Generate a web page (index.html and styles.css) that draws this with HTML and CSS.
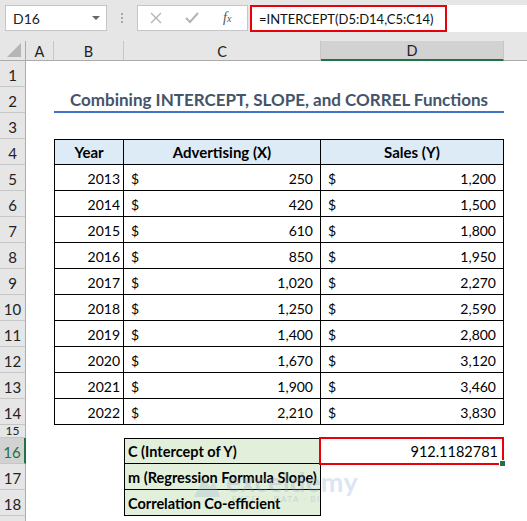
FILE: index.html
```html
<!DOCTYPE html>
<html>
<head>
<meta charset="utf-8">
<link rel="stylesheet" href="styles.css">
</head>
<body>
<div class="topbar">
  <div class="namebox"><span>D16</span><span class="caret"></span></div>
  <div class="dots"><i></i><i></i><i></i></div>
  <div class="btns">
    <svg class="ic" width="14" height="14" viewBox="0 0 14 14"><path d="M2 2L12 12M12 2L2 12" stroke="#b4b4b4" stroke-width="1.4" fill="none"/></svg>
    <svg class="ic" width="16" height="14" viewBox="0 0 16 14"><path d="M2 7L6 11L14 2" stroke="#b4b4b4" stroke-width="2" fill="none"/></svg>
    <span class="fx">f<sub>x</sub></span>
  </div>
  <div class="formula"><span class="ftext">=INTERCEPT(D5:D14,C5:C14)</span></div>
</div>
<div class="sheet">
  <div class="corner"><span class="tri"></span></div>
  <div class="ch">A</div><div class="ch">B</div><div class="ch">C</div><div class="ch sel">D</div><div class="ch last"></div>

  <div class="rh">1</div><div class="c"></div><div class="c"></div><div class="c"></div><div class="c"></div><div class="c"></div>
  <div class="rh">2</div><div class="c"></div><div class="title">Combining INTERCEPT, SLOPE, and CORREL Functions</div><div class="c"></div>
  <div class="rh">3</div><div class="c"></div><div class="c"></div><div class="c"></div><div class="c"></div><div class="c"></div>
  <div class="rh">4</div><div class="c"></div><div class="t hd first">Year</div><div class="t hd">Advertising (X)</div><div class="t hd">Sales (Y)</div><div class="c"></div>

  <div class="rh">5</div><div class="c"></div><div class="t yr first">2013</div><div class="t cur"><span>$</span><span>250</span></div><div class="t cur"><span>$</span><span>1,200</span></div><div class="c"></div>
  <div class="rh">6</div><div class="c"></div><div class="t yr first">2014</div><div class="t cur"><span>$</span><span>420</span></div><div class="t cur"><span>$</span><span>1,500</span></div><div class="c"></div>
  <div class="rh">7</div><div class="c"></div><div class="t yr first">2015</div><div class="t cur"><span>$</span><span>610</span></div><div class="t cur"><span>$</span><span>1,800</span></div><div class="c"></div>
  <div class="rh">8</div><div class="c"></div><div class="t yr first">2016</div><div class="t cur"><span>$</span><span>850</span></div><div class="t cur"><span>$</span><span>1,950</span></div><div class="c"></div>
  <div class="rh">9</div><div class="c"></div><div class="t yr first">2017</div><div class="t cur"><span>$</span><span>1,020</span></div><div class="t cur"><span>$</span><span>2,270</span></div><div class="c"></div>
  <div class="rh">10</div><div class="c"></div><div class="t yr first">2018</div><div class="t cur"><span>$</span><span>1,250</span></div><div class="t cur"><span>$</span><span>2,590</span></div><div class="c"></div>
  <div class="rh">11</div><div class="c"></div><div class="t yr first">2019</div><div class="t cur"><span>$</span><span>1,400</span></div><div class="t cur"><span>$</span><span>2,800</span></div><div class="c"></div>
  <div class="rh">12</div><div class="c"></div><div class="t yr first">2020</div><div class="t cur"><span>$</span><span>1,670</span></div><div class="t cur"><span>$</span><span>3,120</span></div><div class="c"></div>
  <div class="rh">13</div><div class="c"></div><div class="t yr first">2021</div><div class="t cur"><span>$</span><span>1,900</span></div><div class="t cur"><span>$</span><span>3,460</span></div><div class="c"></div>
  <div class="rh">14</div><div class="c"></div><div class="t yr first">2022</div><div class="t cur"><span>$</span><span>2,210</span></div><div class="t cur"><span>$</span><span>3,830</span></div><div class="c"></div>

  <div class="rh short">15</div><div class="c"></div><div class="c"></div><div class="c"></div><div class="c"></div><div class="c"></div>
  <div class="rh active">16</div><div class="c"></div><div class="c"></div><div class="g top">C (Intercept of Y)</div><div class="c res">912.1182781<span class="handle"></span></div><div class="c"></div>
  <div class="rh">17</div><div class="c"></div><div class="c"></div><div class="g">m (Regression Formula Slope)</div><div class="c"></div><div class="c"></div>
  <div class="rh">18</div><div class="c"></div><div class="c"></div><div class="g">Correlation Co-efficient</div><div class="c"></div><div class="c"></div>
  <div class="rh"></div><div class="c"></div><div class="c"></div><div class="c"></div><div class="c"></div><div class="c"></div>

  <div class="wm">
    <svg width="30" height="26" viewBox="0 0 30 26"><path d="M2 24L12 4L18 14L22 8L28 24Z" fill="#9fb8d8"/></svg>
    <div class="wmtext"><span class="wmbig">exceldemy</span><span class="wmsmall">EXCEL · DATA · BI</span></div>
  </div>
</div>
</body>
</html>
```
FILE: styles.css
```css
html, body {
  margin: 0;
  padding: 0;
}
body {
  width: 527px;
  height: 521px;
  overflow: hidden;
  background: #ffffff;
  font-family: Lato, "Noto Sans", sans-serif;
  color: #000;
}
.topbar {
  height: 41px;
  background: #e6e6e6;
  display: flex;
  align-items: flex-start;
  padding-top: 5px;
  box-sizing: border-box;
}
.namebox {
  margin-left: 5px;
  width: 102px;
  height: 26px;
  box-sizing: border-box;
  background: #fff;
  border: 1px solid #c6c6c6;
  display: flex;
  align-items: center;
  justify-content: space-between;
  padding: 0 6px 0 7px;
  font-size: 14px;
  color: #222;
}
.caret {
  width: 0;
  height: 0;
  border-left: 4px solid transparent;
  border-right: 4px solid transparent;
  border-top: 4px solid #666;
}
.dots {
  width: 30px;
  height: 26px;
  display: flex;
  flex-direction: column;
  align-items: center;
  justify-content: center;
  gap: 2px;
}
.dots i {
  width: 2px;
  height: 2px;
  background: #a8a8a8;
}
.btns {
  width: 111px;
  height: 26px;
  box-sizing: border-box;
  background: #fff;
  border: 1px solid #c6c6c6;
  display: flex;
  align-items: center;
  padding-left: 11px;
  gap: 21px;
}
.fx {
  font-family: "Liberation Serif", serif;
  font-style: italic;
  font-size: 14px;
  color: #555;
  margin-left: 2px;
}
.fx sub {
  font-size: 10px;
  vertical-align: 0;
}
.formula {
  flex: 1;
  height: 27px;
  margin-left: 2px;
  background: #fff;
}
.ftext {
  display: inline-block;
  height: 27px;
  box-sizing: border-box;
  border: 2px solid #e8000b;
  padding: 1px 12px 0 7px;
  font-size: 13px;
  line-height: 22px;
  color: #111;
}
.sheet {
  position: relative;
  display: grid;
  grid-template-columns: 26px 28px 70px 197px 183px 23px;
  grid-template-rows: 20px repeat(14, 26px) 13px repeat(3, 26px) 10px;
}
.corner {
  background: #e6e6e6;
  border-right: 1px solid #ababab;
  border-bottom: 1px solid #ababab;
  position: relative;
}
.tri {
  position: absolute;
  right: 4px;
  bottom: 3px;
  width: 0;
  height: 0;
  border-left: 14px solid transparent;
  border-bottom: 14px solid #b5b5b5;
}
.ch {
  background: #e6e6e6;
  border-right: 1px solid #c6c6c6;
  border-bottom: 1px solid #ababab;
  font-size: 14.5px;
  color: #222;
  display: flex;
  align-items: center;
  justify-content: center;
  padding-top: 1px;
}
.ch.sel {
  background: #d2d2d2;
  border-bottom: 2px solid #217346;
  color: #1f1f1f;
}
.ch.last {
  border-right: none;
}
.rh {
  background: #e6e6e6;
  border-right: 1px solid #ababab;
  border-bottom: 1px solid #c6c6c6;
  font-size: 15px;
  color: #222;
  display: flex;
  align-items: flex-end;
  justify-content: center;
  padding-bottom: 2px;
  box-sizing: border-box;
}
.rh.short {
  font-size: 12px;
  line-height: 12px;
  padding-bottom: 0;
  overflow: hidden;
}
.rh.active {
  background: #d2d2d2;
  border-right: 2px solid #217346;
  color: #217346;
}
.c {
  background: #fff;
}
.title {
  grid-column: 3 / 6;
  border-bottom: 3px solid #4472c4;
  color: #44546a;
  font-weight: 700;
  font-size: 17px;
  display: flex;
  align-items: flex-end;
  justify-content: center;
  padding-bottom: 1px;
  margin-bottom: -1px;
}
.t {
  border-right: 1px solid #000;
  border-bottom: 1px solid #000;
  font-size: 14px;
  display: flex;
  align-items: flex-end;
  padding: 0 4px 3px 4px;
  box-sizing: border-box;
}
.t.first {
  border-left: 1px solid #000;
}
.t.hd {
  border-top: 1px solid #000;
  background: #ddebf7;
  font-weight: 700;
  font-size: 15px;
  justify-content: center;
}
.t.yr {
  justify-content: flex-end;
  padding-right: 3px;
}
.t.cur {
  justify-content: space-between;
  padding-left: 7px;
  padding-right: 7px;
}
.g {
  background: #e2efda;
  border: 1px solid #000;
  border-top: none;
  font-weight: 700;
  font-size: 14.5px;
  display: flex;
  align-items: flex-end;
  padding: 0 3px 3px 3px;
  box-sizing: border-box;
  white-space: nowrap;
}
.g.top {
  border-top: 1px solid #000;
}
.res {
  position: relative;
  border: 2px solid #e8000b;
  margin: -1px 0 -1px -2px;
  font-size: 14.5px;
  display: flex;
  align-items: flex-end;
  justify-content: flex-end;
  padding: 0 4px 3px 0;
}
.handle {
  position: absolute;
  right: -4px;
  bottom: -4px;
  width: 5px;
  height: 5px;
  background: #217346;
  border: 1px solid #fff;
}
.wm {
  position: absolute;
  left: 192px;
  top: 427px;
  display: flex;
  align-items: center;
  gap: 4px;
  opacity: 0.3;
  pointer-events: none;
}
.wmtext {
  display: flex;
  flex-direction: column;
  line-height: 1;
}
.wmbig {
  font-size: 27px;
  font-weight: 700;
  color: #8eaad6;
  letter-spacing: 0.5px;
}
.wmsmall {
  font-size: 8px;
  color: #8ea0bb;
  letter-spacing: 1.5px;
  margin-left: 6px;
}
```
